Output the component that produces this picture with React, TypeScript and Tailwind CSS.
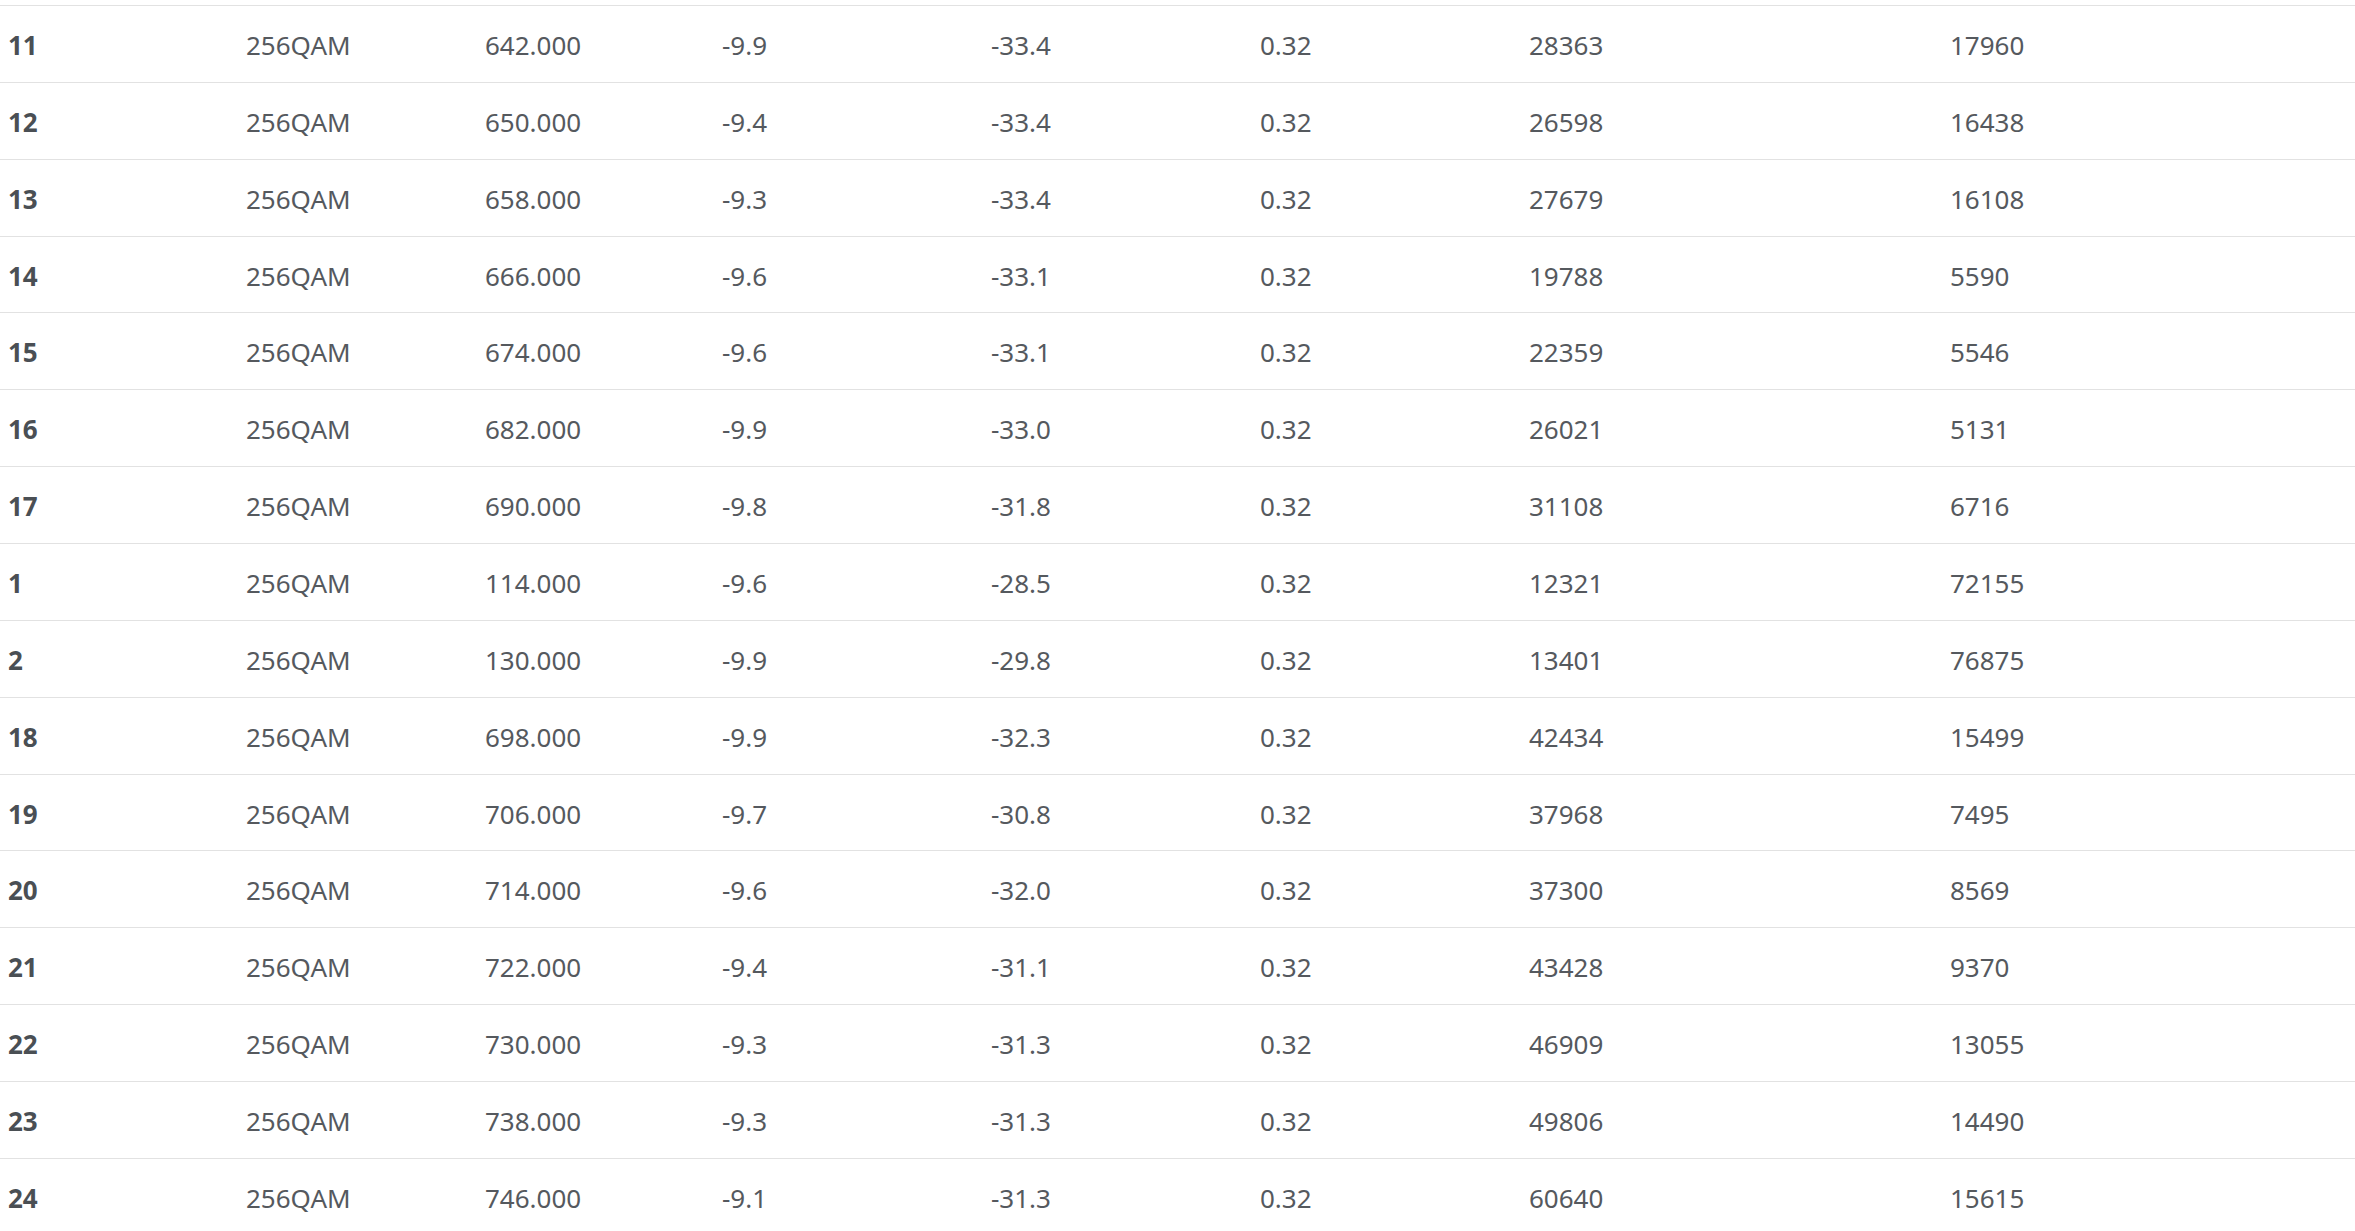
const rows = [
  ["11", "256QAM", "642.000", "-9.9", "-33.4", "0.32", "28363", "17960"],
  ["12", "256QAM", "650.000", "-9.4", "-33.4", "0.32", "26598", "16438"],
  ["13", "256QAM", "658.000", "-9.3", "-33.4", "0.32", "27679", "16108"],
  ["14", "256QAM", "666.000", "-9.6", "-33.1", "0.32", "19788", "5590"],
  ["15", "256QAM", "674.000", "-9.6", "-33.1", "0.32", "22359", "5546"],
  ["16", "256QAM", "682.000", "-9.9", "-33.0", "0.32", "26021", "5131"],
  ["17", "256QAM", "690.000", "-9.8", "-31.8", "0.32", "31108", "6716"],
  ["1", "256QAM", "114.000", "-9.6", "-28.5", "0.32", "12321", "72155"],
  ["2", "256QAM", "130.000", "-9.9", "-29.8", "0.32", "13401", "76875"],
  ["18", "256QAM", "698.000", "-9.9", "-32.3", "0.32", "42434", "15499"],
  ["19", "256QAM", "706.000", "-9.7", "-30.8", "0.32", "37968", "7495"],
  ["20", "256QAM", "714.000", "-9.6", "-32.0", "0.32", "37300", "8569"],
  ["21", "256QAM", "722.000", "-9.4", "-31.1", "0.32", "43428", "9370"],
  ["22", "256QAM", "730.000", "-9.3", "-31.3", "0.32", "46909", "13055"],
  ["23", "256QAM", "738.000", "-9.3", "-31.3", "0.32", "49806", "14490"],
  ["24", "256QAM", "746.000", "-9.1", "-31.3", "0.32", "60640", "15615"],
];

export default function App() {
  return (
    <div className="h-[1231px] overflow-hidden bg-white font-['Noto_Sans',sans-serif] text-[26px] text-[#55595e]">
      {/* bottom edge of the row above, scrolled out */}
      <div className="h-[6px] border-b border-[#e2e2e2]" />

      {/* Channel rows */}
      {rows.map((row) => (
        <div
          key={row[0]}
          className="grid h-[76.87px] grid-cols-[238px_239px_237px_269px_269px_269px_421px_1fr] items-center border-b border-[#e2e2e2]"
        >
          {row.map((cell, i) => (
            <div key={i} className={i === 0 ? "pl-2 pt-[3px] font-bold text-[#4a4f54]" : "pl-2 pt-[3px]"}>
              {cell}
            </div>
          ))}
        </div>
      ))}
    </div>
  );
}
